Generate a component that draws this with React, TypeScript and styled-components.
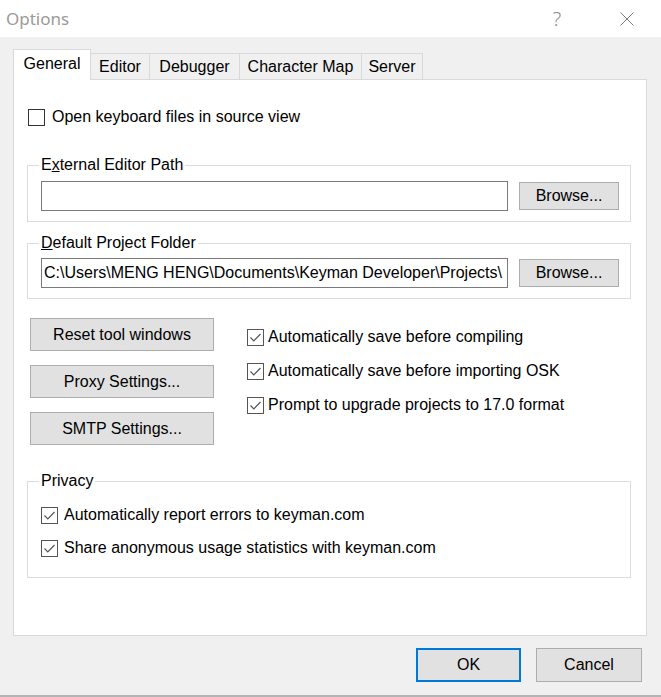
import React from "react";
import styled, { createGlobalStyle } from "styled-components";

const Global = createGlobalStyle`
  html, body { margin: 0; padding: 0; background: #f0f0f0; }
  body {
    font-family: "Liberation Sans", Arial, sans-serif;
    font-size: 16px;
    color: #000;
  }
  * { box-sizing: border-box; }
`;

const Window = styled.div`
  width: 661px;
  height: 697px;
  background: #f0f0f0;
  display: flex;
  flex-direction: column;
  border-bottom: 2px solid #b4b4b4;
  overflow: hidden;
`;

const TitleBar = styled.div`
  height: 37px;
  background: #fff;
  display: flex;
  align-items: center;
  padding-left: 6px;
  padding-right: 9px;
  flex-shrink: 0;
`;

const Title = styled.div`
  font-family: "Noto Sans", "Open Sans", sans-serif;
  font-size: 17px;
  color: #9a9a9a;
  flex: 1;
  padding-bottom: 1px;
`;

const TitleButton = styled.div<{ $w: number; $mr?: number }>`
  width: ${(p) => p.$w}px;
  margin-right: ${(p) => p.$mr ?? 0}px;
  height: 37px;
  display: flex;
  align-items: center;
  justify-content: center;
  color: #8c8c8c;
  font-family: "Noto Sans", "Open Sans", sans-serif;
  font-size: 20px;
  font-weight: 300;
`;

const Body = styled.div`
  padding: 12px 14px 0 13px;
  display: flex;
  flex-direction: column;
`;

const TabStrip = styled.div`
  height: 30px;
  display: flex;
  align-items: flex-end;
  position: relative;
  z-index: 1;
`;

const Tab = styled.div<{ $active?: boolean; $w: number }>`
  width: ${(p) => p.$w}px;
  height: ${(p) => (p.$active ? 31 : 26)}px;
  margin-bottom: ${(p) => (p.$active ? -1 : 0)}px;
  background: ${(p) => (p.$active ? "#fff" : "#f0f0f0")};
  border-top: 1px solid #d9d9d9;
  border-right: 1px solid #d9d9d9;
  border-left: ${(p) => (p.$active ? "1px solid #d9d9d9" : "none")};
  display: flex;
  align-items: center;
  justify-content: center;
  padding-bottom: ${(p) => (p.$active ? 3 : 0)}px;
  white-space: nowrap;
`;

const Page = styled.div`
  height: 557px;
  background: #fff;
  border: 1px solid #d9d9d9;
  display: flex;
  flex-direction: column;
`;

const CheckRow = styled.label<{ $gapText?: number }>`
  height: 20px;
  display: flex;
  align-items: center;
  gap: ${(p) => p.$gapText ?? 7}px;
  white-space: nowrap;
`;

const TopCheck = styled.div`
  margin: 27px 0 0 14px;
`;

const Box = styled.span<{ $dark?: boolean }>`
  width: 17px;
  height: 17px;
  border: 1px solid ${(p) => (p.$dark ? "#333" : "#555")};
  background: #fff;
  display: inline-flex;
  align-items: center;
  justify-content: center;
  flex-shrink: 0;
`;

const Group = styled.fieldset<{ $mt: number; $pt: number; $pb: number }>`
  margin: ${(p) => p.$mt}px 15px 0 13px;
  padding: ${(p) => p.$pt}px 11px ${(p) => p.$pb}px 13px;
  border: 1px solid #dcdcdc;
  min-width: 0;
`;

const Legend = styled.legend`
  padding: 0 2px;
  margin-left: -2px;
  line-height: 18px;
  height: 18px;
`;

const EditRow = styled.div`
  display: flex;
  align-items: center;
  gap: 11px;
`;

const Edit = styled.div`
  flex: 1;
  height: 30px;
  border: 1px solid #7a7a7a;
  background: #fff;
  padding-left: 2px;
  display: flex;
  align-items: center;
  white-space: nowrap;
  overflow: hidden;
`;

const Button = styled.div<{ $w: number; $h: number; $default?: boolean }>`
  width: ${(p) => p.$w}px;
  height: ${(p) => p.$h}px;
  flex-shrink: 0;
  background: #e1e1e1;
  border: ${(p) => (p.$default ? "2px solid #0078d7" : "1px solid #adadad")};
  display: flex;
  align-items: center;
  justify-content: center;
  white-space: nowrap;
`;

const Split = styled.div`
  margin: 19px 0 0 16px;
  display: flex;
  gap: 33px;
`;

const ButtonCol = styled.div`
  display: flex;
  flex-direction: column;
  gap: 14px;
`;

const CheckCol = styled.div`
  padding-top: 9px;
  display: flex;
  flex-direction: column;
  gap: 14px;
`;

const PrivacyList = styled.div`
  display: flex;
  flex-direction: column;
  gap: 13px;
`;

const Footer = styled.div`
  margin-top: 12px;
  padding-right: 5px;
  display: flex;
  justify-content: flex-end;
  gap: 15px;
`;

const Check = ({ checked, dark }: { checked?: boolean; dark?: boolean }) => (
  <Box $dark={dark}>
    {checked && (
      <svg width="13" height="13" viewBox="0 0 13 13">
        <polyline points="1.5,6.5 4.8,9.8 11.5,3" fill="none" stroke="#555" strokeWidth="1.2" />
      </svg>
    )}
  </Box>
);

const tabs = [
  { label: "General", w: 78, active: true },
  { label: "Editor", w: 59 },
  { label: "Debugger", w: 90 },
  { label: "Character Map", w: 122 },
  { label: "Server", w: 61 },
];

export default function App() {
  return (
    <>
      <Global />
      <Window>
        <TitleBar>
          <Title>Options</Title>
          <TitleButton $w={20} $mr={35}>?</TitleButton>
          <TitleButton $w={50}>
            <svg width="14" height="14" viewBox="0 0 14 14">
              <path d="M0.5 0.5 L13.5 13.5 M13.5 0.5 L0.5 13.5" stroke="#7a7a7a" strokeWidth="1" fill="none" />
            </svg>
          </TitleButton>
        </TitleBar>
        <Body>
          <TabStrip>
            {tabs.map((t) => (
              <Tab key={t.label} $active={t.active} $w={t.w}>
                {t.label}
              </Tab>
            ))}
          </TabStrip>
          <Page>
            <TopCheck>
              <CheckRow>
                <Check dark />
                Open keyboard files in source view
              </CheckRow>
            </TopCheck>
            <Group $mt={29} $pt={7} $pb={10}>
              <Legend>
                E<u>x</u>ternal Editor Path
              </Legend>
              <EditRow>
                <Edit />
                <Button $w={100} $h={28}>Browse...</Button>
              </EditRow>
            </Group>
            <Group $mt={12} $pt={6} $pb={10}>
              <Legend>
                <u>D</u>efault Project Folder
              </Legend>
              <EditRow>
                <Edit>C:\Users\MENG HENG\Documents\Keyman Developer\Projects\</Edit>
                <Button $w={100} $h={28}>Browse...</Button>
              </EditRow>
            </Group>
            <Split>
              <ButtonCol>
                <Button $w={184} $h={33}>Reset tool windows</Button>
                <Button $w={184} $h={33}>Proxy Settings...</Button>
                <Button $w={184} $h={33}>SMTP Settings...</Button>
              </ButtonCol>
              <CheckCol>
                <CheckRow $gapText={4}>
                  <Check checked />
                  Automatically save before compiling
                </CheckRow>
                <CheckRow $gapText={4}>
                  <Check checked />
                  Automatically save before importing OSK
                </CheckRow>
                <CheckRow $gapText={4}>
                  <Check checked />
                  Prompt to upgrade projects to 17.0 format
                </CheckRow>
              </CheckCol>
            </Split>
            <Group $mt={27} $pt={15} $pb={19}>
              <Legend>Privacy</Legend>
              <PrivacyList>
                <CheckRow $gapText={6}>
                  <Check checked />
                  Automatically report errors to keyman.com
                </CheckRow>
                <CheckRow $gapText={6}>
                  <Check checked />
                  Share anonymous usage statistics with keyman.com
                </CheckRow>
              </PrivacyList>
            </Group>
          </Page>
          <Footer>
            <Button $w={105} $h={34} $default>OK</Button>
            <Button $w={106} $h={34}>Cancel</Button>
          </Footer>
        </Body>
      </Window>
    </>
  );
}
